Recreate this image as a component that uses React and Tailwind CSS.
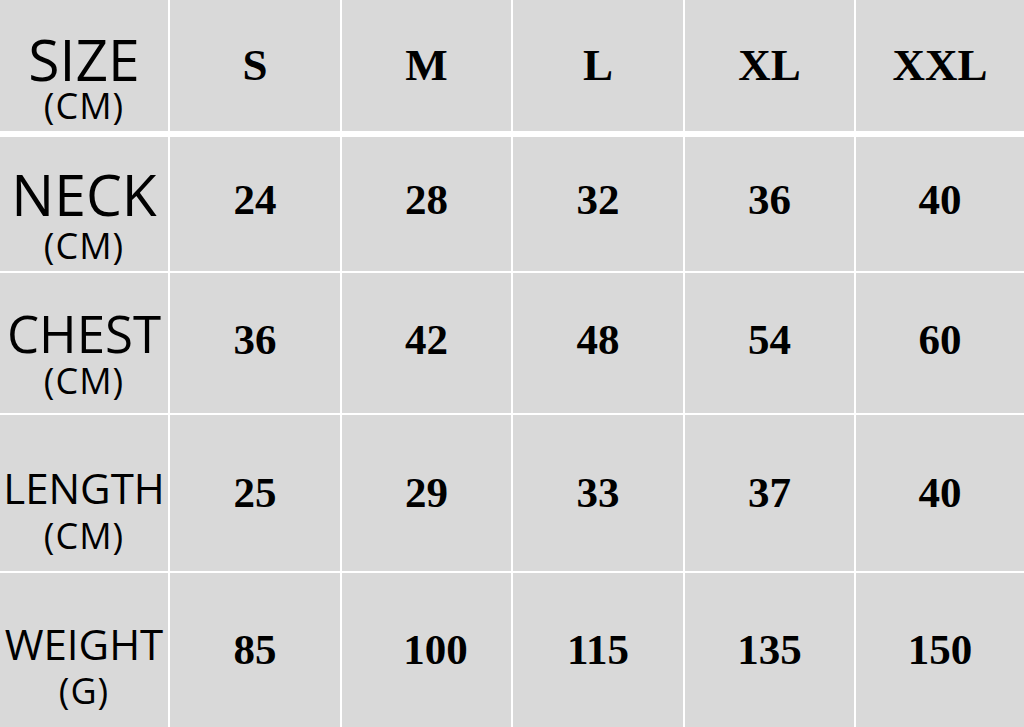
const sizes = ["S", "M", "L", "XL", "XXL"];

const rows = [
  {
    label: "NECK",
    unit: "(CM)",
    big: "text-[57px] pt-[29px]",
    small: "mt-[5px]",
    height: "h-[134px]",
    pad: "pb-[8px]",
    values: ["24", "28", "32", "36", "40"],
  },
  {
    label: "CHEST",
    unit: "(CM)",
    big: "text-[51px] pt-[35px]",
    small: "mt-[4px]",
    height: "h-[140px]",
    pad: "pb-[6px]",
    values: ["36", "42", "48", "54", "60"],
  },
  {
    label: "LENGTH",
    unit: "(CM)",
    big: "text-[42px] pt-[52px]",
    small: "mt-[9px]",
    height: "h-[156px]",
    pad: "",
    values: ["25", "29", "33", "37", "40"],
  },
  {
    label: "WEIGHT",
    unit: "(G)",
    big: "text-[42px] pt-[50px]",
    small: "mt-[8px]",
    height: "h-[154px]",
    pad: "",
    values: ["85", "100", "115", "135", "150"],
  },
];

const cols = "grid grid-cols-[168px_170px_169px_170px_169px_168px] gap-x-[2px]";
const sans = "font-['Open_Sans','Noto_Sans',sans-serif]";
const serif = "font-['Liberation_Serif','Times_New_Roman',serif] font-bold";

const Label = ({ label, unit, big, small }) => (
  <div className={`bg-[#d9d9d9] flex flex-col items-center text-black ${sans}`}>
    <span className={`${big} leading-none`}>{label}</span>
    <span className={`text-[36px] leading-none tracking-[1px] ${small}`}>{unit}</span>
  </div>
);

const Cell = ({ children, className = "" }) => (
  <div className={`bg-[#d9d9d9] flex items-center justify-center text-black ${serif} ${className}`}>
    {children}
  </div>
);

export default function App() {
  return (
    <div className="w-[1024px] h-[727px] bg-white flex flex-col overflow-hidden">
      <div className={`${cols} h-[131px] mb-[6px]`}>
        <Label label="SIZE" unit="(CM)" big="text-[57px] pt-[31px]" small="mt-[0px]" />
        {sizes.map((s) => (
          <Cell key={s} className="text-[45px]">
            {s}
          </Cell>
        ))}
      </div>
      <div className="flex flex-col gap-y-[2px]">
        {rows.map((r) => (
          <div key={r.label} className={`${cols} ${r.height}`}>
            <Label label={r.label} unit={r.unit} big={r.big} small={r.small} />
            {r.values.map((v, j) => (
              <Cell key={j} className={`text-[43px] ${r.pad} ${v === "100" ? "pl-[18px]" : ""}`}>
                {v}
              </Cell>
            ))}
          </div>
        ))}
      </div>
    </div>
  );
}
